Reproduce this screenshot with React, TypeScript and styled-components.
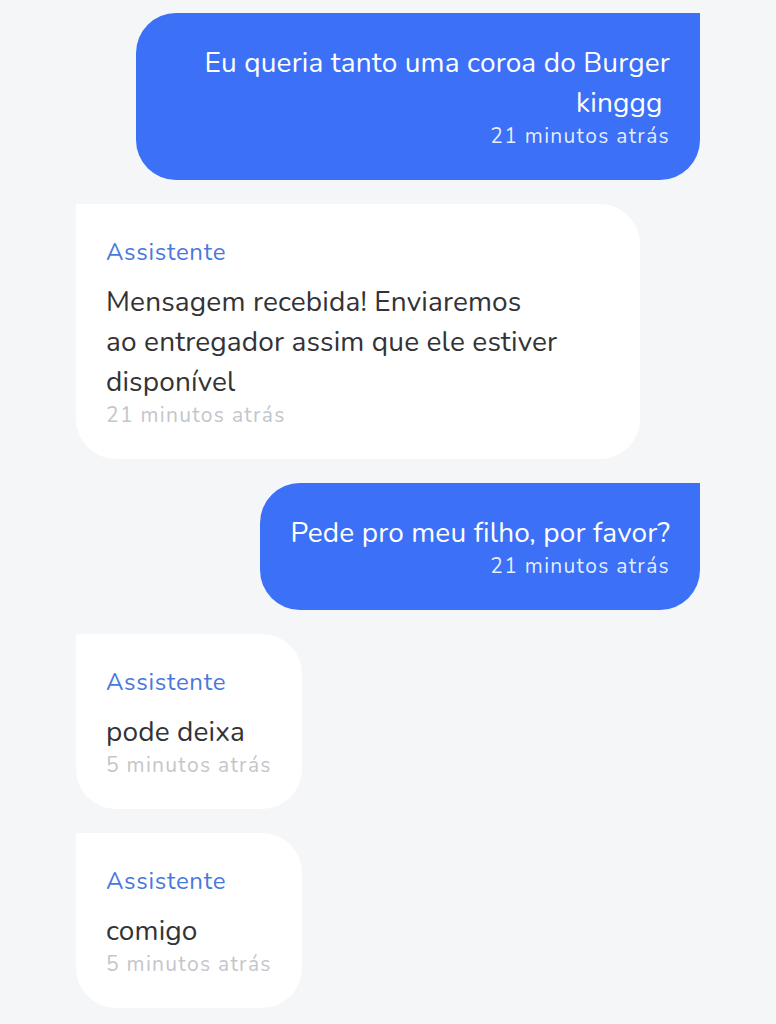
import React from "react";
import styled, { createGlobalStyle } from "styled-components";

const Global = createGlobalStyle`
  html, body {
    margin: 0;
    padding: 0;
    background: #f5f6f8;
  }
  body {
    font-family: "Nunito", "Lato", "Noto Sans", sans-serif;
    -webkit-font-smoothing: antialiased;
  }
`;

const Thread = styled.div`
  display: flex;
  flex-direction: column;
  gap: 24px;
  padding: 13px 76px 16px 76px;
  min-height: 1024px;
  box-sizing: border-box;
  background: #f5f6f8;
`;

const Bubble = styled.div<{ $mine: boolean }>`
  align-self: ${(p) => (p.$mine ? "flex-end" : "flex-start")};
  max-width: 564px;
  box-sizing: border-box;
  padding: 30px;
  border-radius: ${(p) => (p.$mine ? "40px 0 40px 40px" : "3px 40px 40px 40px")};
  background: ${(p) => (p.$mine ? "#3b70f7" : "#ffffff")};
  text-align: ${(p) => (p.$mine ? "right" : "left")};
  display: flex;
  flex-direction: column;
`;

const Sender = styled.div`
  font-size: 24px;
  line-height: 36px;
  letter-spacing: 0.7px;
  color: #4a78dc;
  margin-bottom: 12px;
`;

const Body = styled.div<{ $mine: boolean }>`
  font-size: 28px;
  line-height: 40px;
  letter-spacing: 0.15px;
  color: ${(p) => (p.$mine ? "#ffffff" : "#333336")};
  white-space: pre-line;
`;

const Time = styled.div<{ $mine: boolean }>`
  font-size: 21px;
  line-height: 27px;
  letter-spacing: 1.3px;
  color: ${(p) => (p.$mine ? "rgba(255,255,255,0.88)" : "#c3c6cb")};
`;

type Msg = { mine: boolean; text: string; time: string };

const messages: Msg[] = [
  { mine: true, text: "Eu queria tanto uma coroa do Burger kinggg\u00a0", time: "21 minutos atrás" },
  {
    mine: false,
    text: "Mensagem recebida! Enviaremos\nao entregador assim que ele estiver disponível",
    time: "21 minutos atrás",
  },
  { mine: true, text: "Pede pro meu filho, por favor?", time: "21 minutos atrás" },
  { mine: false, text: "pode deixa", time: "5 minutos atrás" },
  { mine: false, text: "comigo", time: "5 minutos atrás" },
];

export default function App() {
  return (
    <>
      <Global />
      <Thread>
        {messages.map((m, i) => (
          <Bubble key={i} $mine={m.mine}>
            {!m.mine && <Sender>Assistente</Sender>}
            <Body $mine={m.mine}>{m.text}</Body>
            <Time $mine={m.mine}>{m.time}</Time>
          </Bubble>
        ))}
      </Thread>
    </>
  );
}
